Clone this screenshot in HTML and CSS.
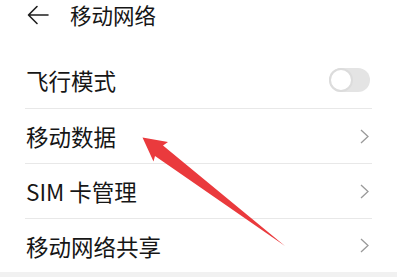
FILE: index.html
```html
<!DOCTYPE html>
<html lang="zh-CN">
<head>
<meta charset="utf-8">
<title>移动网络</title>
<link rel="stylesheet" href="styles.css">
</head>
<body>
<div class="page">
  <header class="header">
    <svg class="back" width="22" height="20" viewBox="0 0 22 20">
      <path d="M21 10H2M10 1.5L1.5 10L10 18.5" fill="none" stroke="#1f1f1f" stroke-width="1.6" stroke-linecap="round" stroke-linejoin="round"/>
    </svg>
    <h1 class="title">移动网络</h1>
  </header>
  <ul class="list">
    <li class="row first">
      <span class="label">飞行模式</span>
      <span class="switch"><span class="knob"></span></span>
    </li>
    <li class="row">
      <span class="label">移动数据</span>
      <svg class="chev" width="9" height="15" viewBox="0 0 9 15"><path d="M1 1L8 7.5L1 14" fill="none" stroke="#9a9a9a" stroke-width="1.3"/></svg>
    </li>
    <li class="row">
      <span class="label">SIM 卡管理</span>
      <svg class="chev" width="9" height="15" viewBox="0 0 9 15"><path d="M1 1L8 7.5L1 14" fill="none" stroke="#9a9a9a" stroke-width="1.3"/></svg>
    </li>
    <li class="row last">
      <span class="label">移动网络共享</span>
      <svg class="chev" width="9" height="15" viewBox="0 0 9 15"><path d="M1 1L8 7.5L1 14" fill="none" stroke="#9a9a9a" stroke-width="1.3"/></svg>
    </li>
  </ul>
  <div class="band"></div>
  <svg class="pointer" width="397" height="277" viewBox="0 0 397 277">
    <polygon points="142.5,137.5 168,142 163,145.5 285,246 155,156 153.5,161.5" fill="#ea3a3d"/>
  </svg>
</div>
</body>
</html>
```

FILE: styles.css
```css
html, body {
  margin: 0;
  padding: 0;
  background: #ffffff;
}

.page {
  position: relative;
  width: 397px;
  height: 277px;
  overflow: hidden;
  font-family: "Noto Sans CJK SC", "Noto Sans", sans-serif;
  color: #161616;
  display: flex;
  flex-direction: column;
}

.header {
  display: flex;
  align-items: center;
  height: 30px;
  padding-left: 27px;
  gap: 21px;
  margin-bottom: 22px;
}

.back {
  display: block;
}

.title {
  margin: 0;
  font-size: 21.5px;
  font-weight: 400;
  line-height: 30px;
}

.list {
  list-style: none;
  margin: 0 25px;
  padding: 0;
}

.row {
  display: flex;
  align-items: center;
  justify-content: space-between;
  height: 54px;
  border-bottom: 1px solid #e8e8e8;
  padding: 0 3px 0 1px;
}

.row.first {
  height: 56px;
}

.row.last {
  border-bottom: none;
  height: 53px;
}

.label {
  font-size: 22.5px;
  line-height: 30px;
}

.switch {
  position: relative;
  width: 41px;
  height: 24px;
  border-radius: 12px;
  background: #e4e4e4;
  margin-right: -1px;
}

.knob {
  position: absolute;
  left: 0;
  top: 0;
  width: 20px;
  height: 20px;
  border-radius: 50%;
  background: #ffffff;
  border: 2px solid #dcdcdc;
}

.chev {
  display: block;
}

.band {
  flex: 1;
  background: #f1f1f1;
}

.pointer {
  position: absolute;
  left: 0;
  top: 0;
}
```
